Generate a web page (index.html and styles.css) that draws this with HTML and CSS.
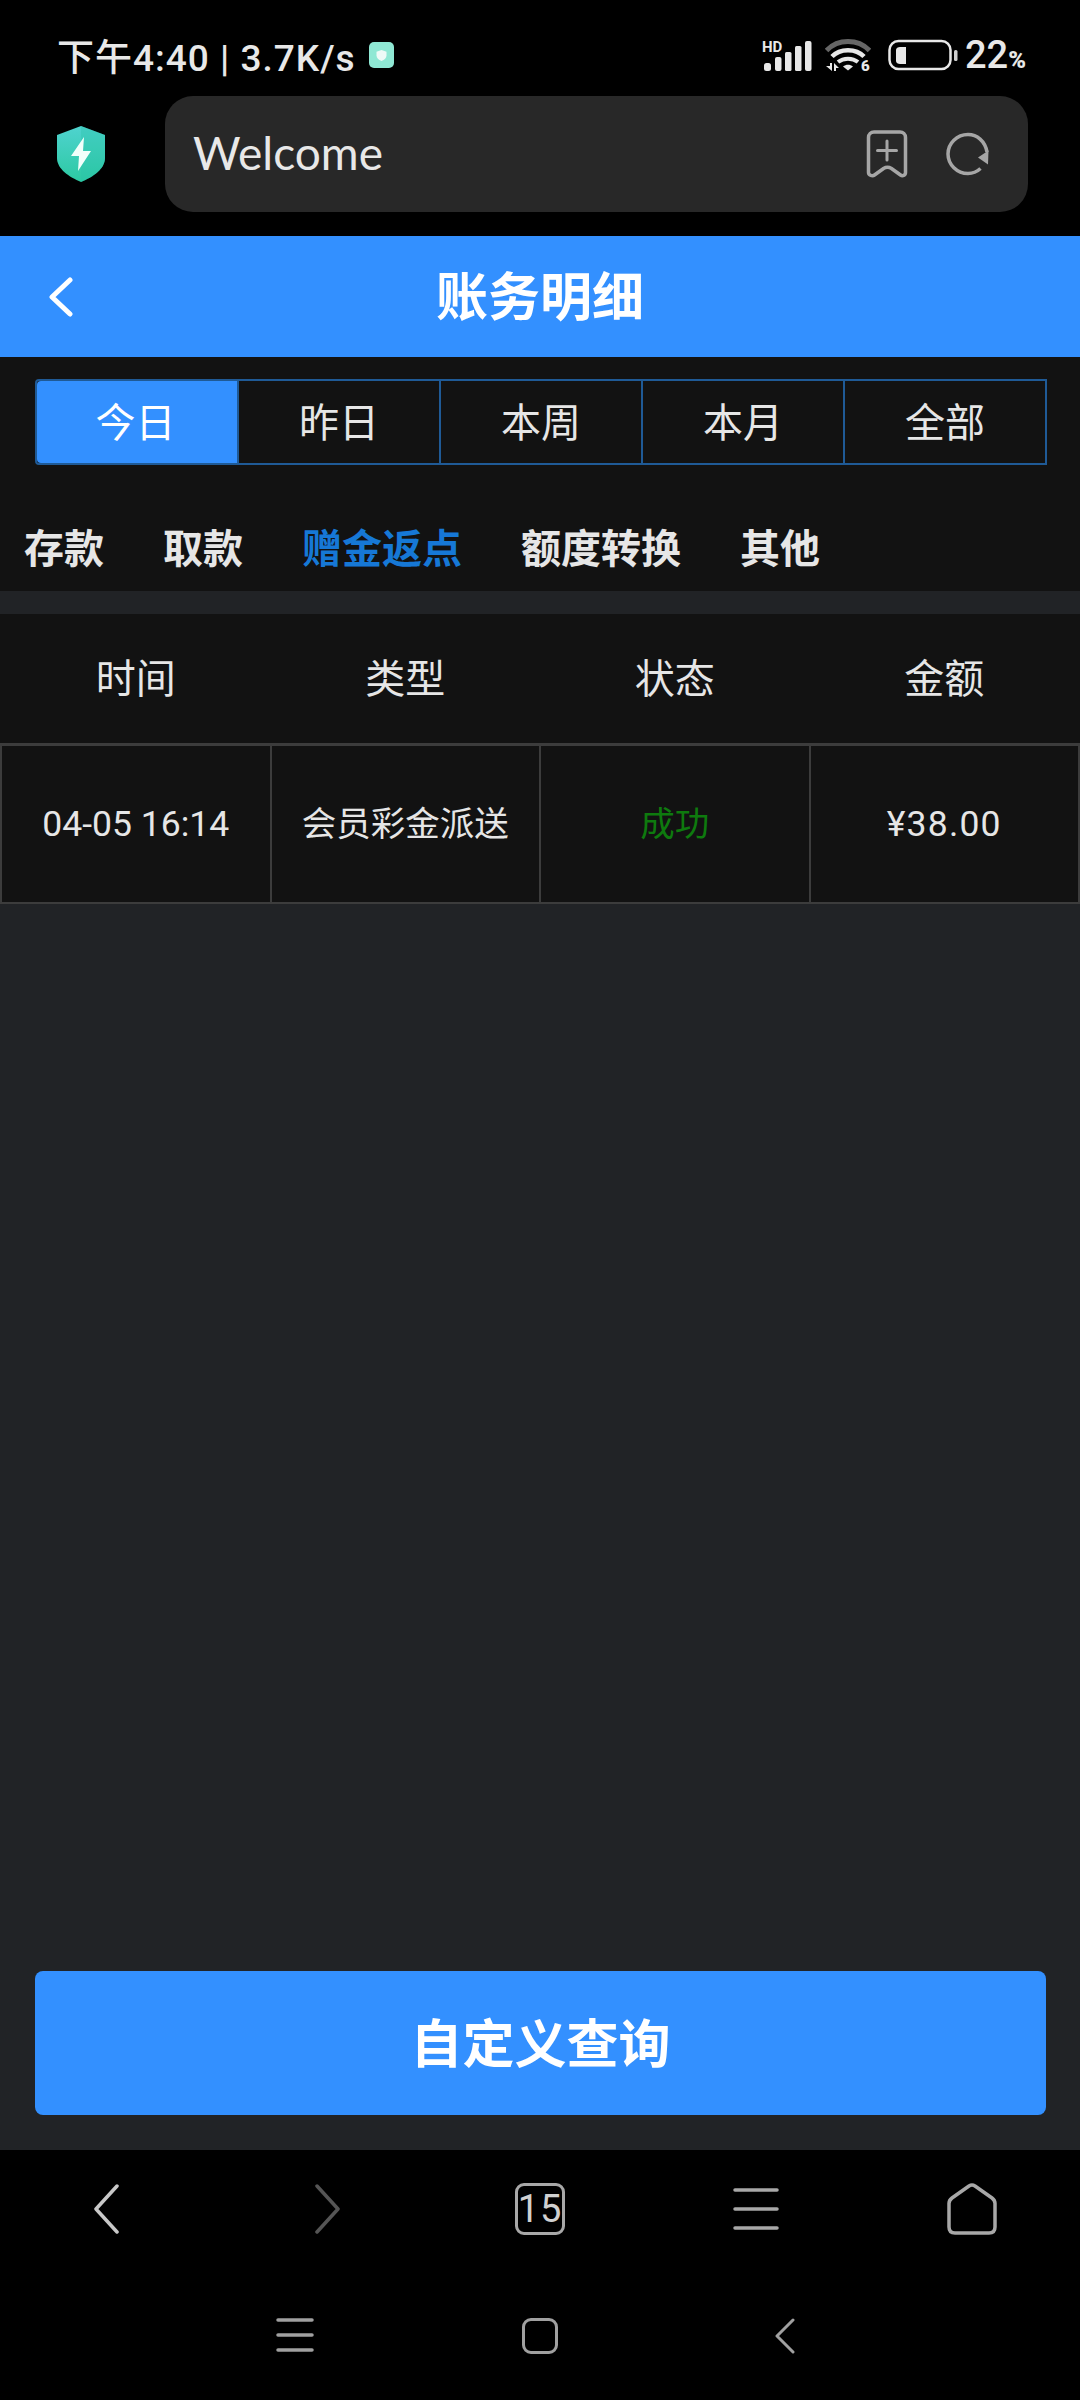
FILE: index.html
```html
<!DOCTYPE html>
<html lang="zh-CN">
<head>
  <meta charset="UTF-8" />
  <title>账务明细</title>
  <meta name="viewport" content="width=device-width, initial-scale=1.0" />
  <link rel="stylesheet" href="styles.css">
</head>
<body>

<div class="phone">

  <div class="statusbar">
    <div class="status-left">
      <span class="status-text">下午4:40 | 3.7K/s</span>
      <svg class="vpn" width="25" height="26" viewBox="0 0 25 26">
        <rect width="25" height="26" rx="5" fill="#8fe8d4"/>
        <path d="M12.5 8l5 1.8v3.6c0 2.6-2 4.4-5 5.6-3-1.2-5-3-5-5.6V9.8z" fill="#eefaf7"/>
      </svg>
    </div>
    <div class="status-right">
      <svg class="signal" width="50" height="36" viewBox="0 -4 50 36">
        <text x="0" y="11" class="hd">HD</text>
        <rect x="2" y="22" width="7" height="8" rx="2.5" fill="#e8e8e8"/>
        <rect x="13" y="16" width="6.5" height="14" rx="2" fill="#e8e8e8"/>
        <rect x="23" y="11" width="6.5" height="19" rx="1.5" fill="#e8e8e8"/>
        <rect x="33" y="5" width="6.5" height="25" rx="1.5" fill="#e8e8e8"/>
        <rect x="43" y="0" width="6.5" height="30" rx="2" fill="#e8e8e8"/>
      </svg>
      <svg class="wifi" width="46" height="42" viewBox="0 -4 46 42">
        <path d="M1.5 12.5C13 .5 33 .5 44.5 12.5" fill="none" stroke="#666" stroke-width="5"/>
        <path d="M7 18.5C15 10 31 10 39 18.5" fill="none" stroke="#e8e8e8" stroke-width="4.5"/>
        <path d="M13 24c5.5-4.5 14.5-4.5 20 0" fill="none" stroke="#e8e8e8" stroke-width="4"/>
        <path d="M18 28.5c3-2.5 7-2.5 10 0l-5 4z" fill="#e8e8e8"/>
        <path d="M1 28h4v-3h2v8zM9 33v-8l5 5h-3v3z" fill="#e8e8e8"/>
        <text x="36" y="33" class="wifi-six">6</text>
      </svg>
      <svg class="battery" width="70" height="32" viewBox="0 0 70 32">
        <rect x="1.5" y="2" width="61" height="28" rx="9" fill="none" stroke="#e8e8e8" stroke-width="2.5"/>
        <path d="M12 8h6v17h-6c-2 0-4-1-4-3V11c0-2 2-3 4-3z" fill="#e8e8e8"/>
        <rect x="66" y="11" width="3.5" height="11" rx="1.5" fill="#d0d0d0"/>
      </svg>
      <span class="battery-num">22<small>%</small></span>
    </div>
  </div>

  <div class="addressbar">
    <svg class="shield" width="48" height="56" viewBox="0 0 48 56">
      <defs>
        <linearGradient id="shieldGrad" x1="0" y1="0" x2="0" y2="1">
          <stop offset="0" stop-color="#4fd3cf"/>
          <stop offset="1" stop-color="#2cc9a2"/>
        </linearGradient>
      </defs>
      <path d="M24 0l24 9v23c0 11-12 19-24 24C12 51 0 43 0 32V9z" fill="url(#shieldGrad)"/>
      <path d="M24 0l24 9v23c0 11-12 19-24 24z" fill="#2bc4a8" opacity=".35"/>
      <path d="M27 11L14 30h8l-1 15 13-20h-8z" fill="#f2fffb"/>
    </svg>
    <div class="urlbox">
      <span class="url-text">Welcome</span>
      <svg class="url-icon" width="42" height="48" viewBox="0 0 42 48">
        <path d="M8 2h26c3 0 5.5 2 5.5 5.5v35c0 3-3 4-5 2.5l-9-6.5c-2.500-1.500-5.500-1.500-8 0l-9 6.500c-2 1.500-6 .5-6-2.500v-35C2.500 4 5 2 8 2z" fill="none" stroke="#a6a6a6" stroke-width="3.5"/>
        <path d="M21 11v19M11.5 20.5h19" fill="none" stroke="#a6a6a6" stroke-width="3" stroke-linecap="round"/>
      </svg>
      <svg class="url-icon" width="44" height="44" viewBox="0 0 44 44">
        <path d="M41 20C39 9 31 2.5 22 2.5 11 2.5 2 11.5 2 22s9 19.5 20 19.5c5 0 9-1.8 12.5-5" fill="none" stroke="#a6a6a6" stroke-width="3.5"/>
        <path d="M42.5 18.5l-.5 14-10-7z" fill="#a6a6a6"/>
      </svg>
    </div>
  </div>

  <header class="topbar">
    <svg class="topbar-back" width="26" height="40" viewBox="0 0 26 40">
      <path d="M23 3L5 20l18 17" fill="none" stroke="#fff" stroke-width="5" stroke-linecap="round" stroke-linejoin="round"/>
    </svg>
    <h1 class="topbar-title">账务明细</h1>
  </header>

  <section class="filters">
    <div class="segments">
      <div class="segment active">今日</div>
      <div class="segment">昨日</div>
      <div class="segment">本周</div>
      <div class="segment">本月</div>
      <div class="segment">全部</div>
    </div>
    <div class="tabs">
      <span class="tab">存款</span>
      <span class="tab">取款</span>
      <span class="tab active">赠金返点</span>
      <span class="tab">额度转换</span>
      <span class="tab">其他</span>
    </div>
  </section>

  <main class="content">
    <table class="records">
      <thead>
        <tr>
          <th>时间</th>
          <th>类型</th>
          <th>状态</th>
          <th>金额</th>
        </tr>
      </thead>
      <tbody>
        <tr>
          <td>04-05 16:14</td>
          <td class="cjk">会员彩金派送</td>
          <td class="cjk success">成功</td>
          <td class="amount">¥38.00</td>
        </tr>
      </tbody>
    </table>
    <button class="query-btn">自定义查询</button>
  </main>

  <nav class="browser-nav">
    <svg class="nav-back" width="26" height="50" viewBox="0 0 26 50">
      <path d="M24 2L3 25l21 23" fill="none" stroke="#c8c8c8" stroke-width="3.5" stroke-linecap="round" stroke-linejoin="round"/>
    </svg>
    <svg class="nav-forward" width="26" height="50" viewBox="0 0 26 50">
      <path d="M2 2l21 23L2 48" fill="none" stroke="#555" stroke-width="3.5" stroke-linecap="round" stroke-linejoin="round"/>
    </svg>
    <div class="tab-count">15</div>
    <svg width="46" height="44" viewBox="0 0 46 44">
      <path d="M2 3h42M2 22h42M2 41h42" fill="none" stroke="#a8a8a8" stroke-width="3.5" stroke-linecap="round"/>
    </svg>
    <svg width="50" height="52" viewBox="0 0 50 52">
      <path d="M22 3L5 15c-2 1.5-3 3-3 5.5V44c0 3.5 2 6 6 6h34c4 0 6-2.5 6-6V20.5c0-2.5-1-4-3-5.5L28 3c-2-1.3-4-1.3-6 0z" fill="none" stroke="#a8a8a8" stroke-width="3.5"/>
    </svg>
  </nav>

  <nav class="system-nav">
    <svg width="38" height="34" viewBox="0 0 38 34">
      <path d="M2 2h34M2 17h34M2 32h34" fill="none" stroke="#a0a0a0" stroke-width="3.5" stroke-linecap="round"/>
    </svg>
    <div class="sys-square"></div>
    <svg width="20" height="36" viewBox="0 0 20 36">
      <path d="M18 2L2 18l16 16" fill="none" stroke="#a0a0a0" stroke-width="3" stroke-linecap="round" stroke-linejoin="round"/>
    </svg>
  </nav>

</div>

</body>
</html>
```

FILE: styles.css
```css
* {
  box-sizing: border-box;
}
body {
  margin: 0;
  background: #000;
  font-family: Roboto, "Noto Sans CJK SC", sans-serif;
  color: #e6e6e6;
}
.phone {
  width: 1080px;
  height: 2400px;
  display: flex;
  flex-direction: column;
  overflow: hidden;
}

/* status bar */
.statusbar {
  height: 96px;
  padding: 14px 54px 0 57px;
  display: flex;
  justify-content: space-between;
  align-items: center;
  background: #000;
}
.status-left {
  display: flex;
  align-items: center;
  gap: 13px;
}
.status-text {
  font-size: 37px;
  font-weight: 500;
  letter-spacing: 1px;
  color: #e8e8e8;
  white-space: nowrap;
}
.status-right {
  display: flex;
  align-items: center;
}
.signal {
  margin-right: 13px;
}
.hd {
  font-family: Roboto, sans-serif;
  font-size: 15px;
  font-weight: 700;
  fill: #e8e8e8;
}
.wifi {
  margin-right: 17px;
}
.wifi-six {
  font-family: Roboto, sans-serif;
  font-size: 15px;
  font-weight: 900;
  fill: #e8e8e8;
}
.battery {
  margin-right: 7px;
}
.battery-num {
  font-size: 38px;
  font-weight: 500;
  color: #e8e8e8;
  line-height: 1;
}
.battery-num small {
  font-size: 24px;
  font-weight: 900;
}

/* browser address bar */
.addressbar {
  height: 140px;
  padding: 0 52px 24px 57px;
  display: flex;
  align-items: center;
  background: #000;
}
.shield {
  flex: none;
  margin-right: 60px;
}
.urlbox {
  flex: 1;
  height: 116px;
  padding: 0 38px 0 28px;
  display: flex;
  align-items: center;
  gap: 38px;
  background: #282828;
  border-radius: 28px;
}
.url-text {
  flex: 1;
  padding-bottom: 3px;
  font-family: Lato, sans-serif;
  font-size: 46px;
  color: #e8e8e8;
}

/* page header */
.topbar {
  position: relative;
  height: 121px;
  padding-bottom: 7px;
  display: flex;
  align-items: center;
  justify-content: center;
  background: #3390ff;
}
.topbar-back {
  position: absolute;
  left: 47px;
  top: 41px;
}
.topbar-title {
  margin: 0;
  font-size: 52px;
  font-weight: 700;
  color: #fff;
}

/* filters */
.filters {
  padding-top: 22px;
  background: #121212;
}
.segments {
  margin: 0 33px 0 35px;
  height: 86px;
  display: flex;
  border: 2px solid #1f5a96;
  border-radius: 4px 0 0 4px;
}
.segment {
  flex: 1 1 0;
  padding-bottom: 5px;
  display: flex;
  align-items: center;
  justify-content: center;
  border-left: 2px solid #1f5a96;
  font-size: 40px;
  color: #e6e6e6;
}
.segment:first-child {
  flex: 0 0 200px;
  border-left: none;
}
.segment.active {
  padding-right: 3px;
  background: #3390ff;
  color: #fff;
  border-radius: 4px 0 0 4px;
}
.tabs {
  height: 126px;
  padding: 44px 0 0 24px;
  display: flex;
  gap: 59px;
}
.tab {
  font-size: 40px;
  font-weight: 700;
  line-height: 82px;
  color: #e6e6e6;
}
.tab.active {
  color: #1678d6;
}

/* records */
.content {
  flex: 1;
  display: flex;
  flex-direction: column;
  padding-top: 23px;
  background: #212326;
}
.records {
  width: 100%;
  table-layout: fixed;
  border-collapse: collapse;
  background: #121212;
}
.records th {
  height: 130px;
  padding-bottom: 6px;
  font-size: 40px;
  font-weight: 400;
  color: #e6e6e6;
  border-bottom: 3px solid #3c3c3c;
}
.records td {
  height: 159px;
  text-align: center;
  font-size: 35.5px;
  color: #e6e6e6;
  border: 2px solid #3c3c3c;
}
.records td.cjk {
  padding-bottom: 6px;
  font-size: 34.5px;
}
.records td.amount {
  letter-spacing: 1.2px;
}
.records td.success {
  color: #0e7a0e;
}
.query-btn {
  margin: auto 34px 35px 35px;
  height: 144px;
  padding-bottom: 6px;
  border: none;
  border-radius: 8px;
  background: #3390ff;
  color: #fff;
  font-family: inherit;
  font-size: 52px;
  font-weight: 700;
}

/* bottom navigation */
.browser-nav {
  flex: none;
  height: 118px;
  display: grid;
  grid-template-columns: repeat(5, 216px);
  justify-items: center;
  align-items: center;
  background: #000;
}
.nav-back {
  margin-right: 5px;
}
.nav-forward {
  margin-left: 8px;
}
.tab-count {
  width: 50px;
  height: 52px;
  display: flex;
  align-items: center;
  justify-content: center;
  border: 3px solid #a8a8a8;
  border-radius: 9px;
  font-size: 38px;
  letter-spacing: 1px;
  color: #d0d0d0;
}
.system-nav {
  flex: none;
  height: 132px;
  padding: 50px 172px 0;
  display: grid;
  grid-template-columns: repeat(3, 245px);
  justify-items: center;
  align-items: start;
  background: #000;
}
.sys-square {
  width: 36px;
  height: 36px;
  border: 3.5px solid #a0a0a0;
  border-radius: 9px;
}
```
